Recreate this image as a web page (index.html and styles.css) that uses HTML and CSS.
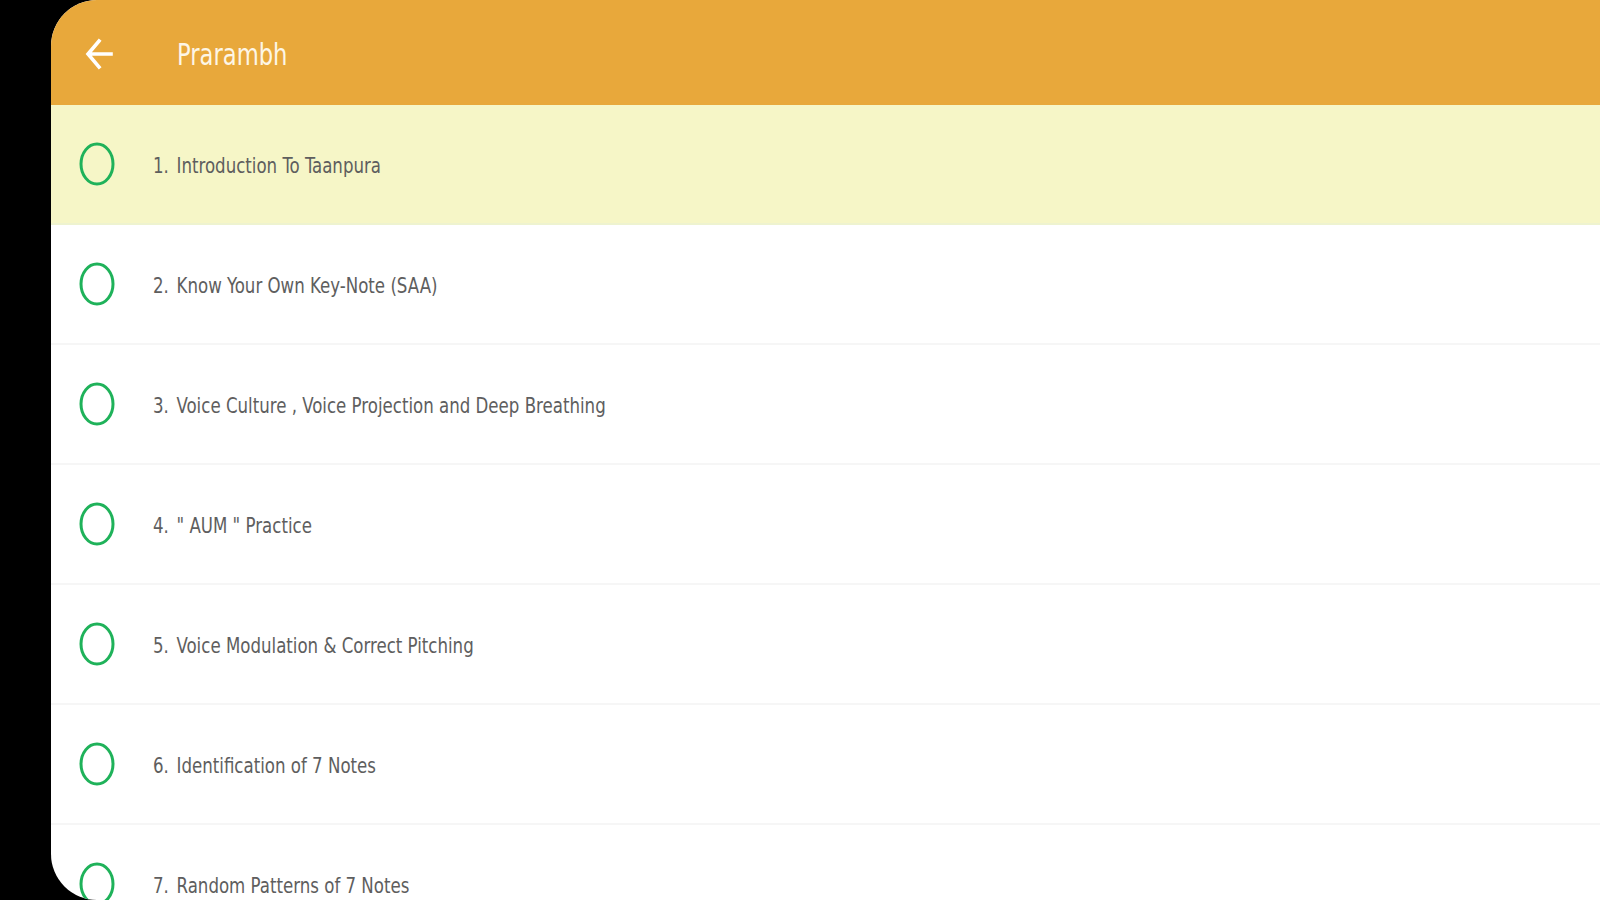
FILE: index.html
```html
<!DOCTYPE html>
<html lang="en">
<head>
  <meta charset="UTF-8" />
  <meta name="viewport" content="width=device-width, initial-scale=1.0" />
  <title>Prarambh</title>
  <link rel="stylesheet" href="styles.css">
</head>
<body>
  <div class="screen">
    <header class="toolbar">
      <svg class="back" viewBox="0 0 28 34" width="28" height="34">
        <path d="M26 17H4M14 4L3 17L14 30" fill="none" stroke="#fff" stroke-width="3.6" stroke-linecap="square"/>
      </svg>
      <h1>Prarambh</h1>
    </header>

    <ul class="lessons">
      <li class="lesson active">
        <svg class="check" viewBox="0 0 36 44" width="36" height="44"><ellipse cx="18" cy="22" rx="16" ry="20" fill="none" stroke="#1fb25a" stroke-width="3"/></svg>
        <span class="label"><span class="num">1.</span>Introduction To Taanpura</span>
      </li>
      <li class="lesson">
        <svg class="check" viewBox="0 0 36 44" width="36" height="44"><ellipse cx="18" cy="22" rx="16" ry="20" fill="none" stroke="#1fb25a" stroke-width="3"/></svg>
        <span class="label"><span class="num">2.</span>Know Your Own Key-Note (SAA)</span>
      </li>
      <li class="lesson">
        <svg class="check" viewBox="0 0 36 44" width="36" height="44"><ellipse cx="18" cy="22" rx="16" ry="20" fill="none" stroke="#1fb25a" stroke-width="3"/></svg>
        <span class="label"><span class="num">3.</span>Voice Culture , Voice Projection and Deep Breathing</span>
      </li>
      <li class="lesson">
        <svg class="check" viewBox="0 0 36 44" width="36" height="44"><ellipse cx="18" cy="22" rx="16" ry="20" fill="none" stroke="#1fb25a" stroke-width="3"/></svg>
        <span class="label"><span class="num">4.</span>" AUM " Practice</span>
      </li>
      <li class="lesson">
        <svg class="check" viewBox="0 0 36 44" width="36" height="44"><ellipse cx="18" cy="22" rx="16" ry="20" fill="none" stroke="#1fb25a" stroke-width="3"/></svg>
        <span class="label"><span class="num">5.</span>Voice Modulation &amp; Correct Pitching</span>
      </li>
      <li class="lesson">
        <svg class="check" viewBox="0 0 36 44" width="36" height="44"><ellipse cx="18" cy="22" rx="16" ry="20" fill="none" stroke="#1fb25a" stroke-width="3"/></svg>
        <span class="label"><span class="num">6.</span>Identification of 7 Notes</span>
      </li>
      <li class="lesson">
        <svg class="check" viewBox="0 0 36 44" width="36" height="44"><ellipse cx="18" cy="22" rx="16" ry="20" fill="none" stroke="#1fb25a" stroke-width="3"/></svg>
        <span class="label"><span class="num">7.</span>Random Patterns of 7 Notes</span>
      </li>
    </ul>
  </div>
</body>
</html>
```

FILE: styles.css
```css
html, body {
  margin: 0;
  height: 100%;
  background: #000;
  overflow: hidden;
}
body {
  font-family: 'DejaVu Sans Condensed', 'DejaVu Sans', sans-serif;
}
.screen {
  margin-left: 51px;
  height: 900px;
  background: #fff;
  border-radius: 46px 0 0 46px;
  overflow: hidden;
}
.toolbar {
  height: 105px;
  background: #e8a83b;
  display: flex;
  align-items: center;
  padding-left: 34px;
  box-sizing: border-box;
}
.toolbar .back {
  display: block;
  margin-top: 2px;
}
.toolbar h1 {
  margin: 4px 0 0 64px;
  color: #fdf6e6;
  font-size: 30px;
  font-weight: normal;
  transform: scaleX(0.84);
  transform-origin: left center;
}
.lessons {
  list-style: none;
  margin: 0;
  padding: 0;
}
.lesson {
  height: 120px;
  display: flex;
  align-items: center;
  padding-left: 28px;
  box-sizing: border-box;
  border-bottom: 2px solid #f6f6f6;
  color: #5e5e5e;
  font-size: 22px;
}
.lesson.active {
  background: #f6f6c7;
  border-bottom-color: #eef3d0;
}
.lesson .check {
  display: block;
  flex: none;
}
.lesson .label {
  display: inline-block;
  margin-left: 38px;
  margin-top: 2px;
  white-space: nowrap;
  transform: scaleX(0.84);
  transform-origin: left center;
}
.lesson .num {
  display: inline-block;
  width: 28px;
}
```
